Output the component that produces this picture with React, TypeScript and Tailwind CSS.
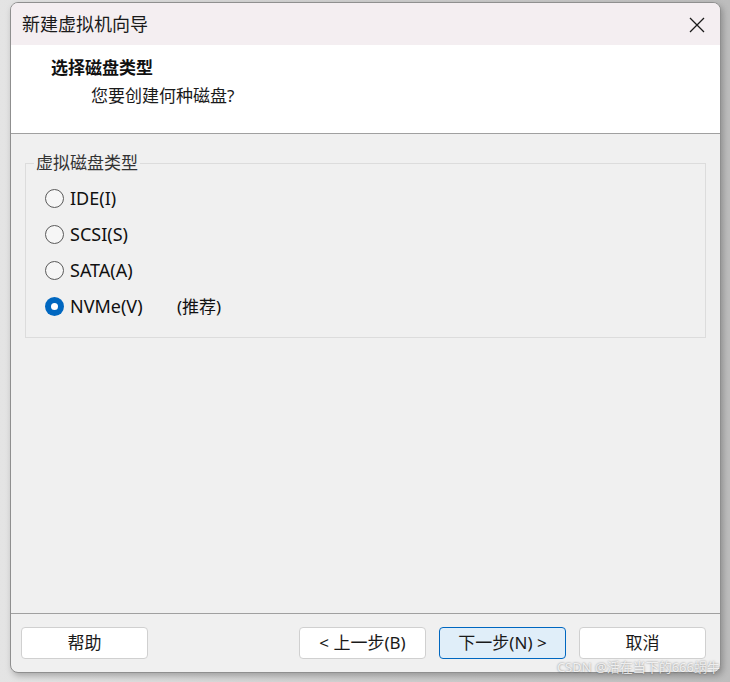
import React from "react";

const cjk = "font-['Segoe_UI','Noto_Sans','Noto_Sans_CJK_SC',sans-serif]";

function Radio({ checked }: { checked?: boolean }) {
  if (checked) {
    return (
      <span className="flex h-[19px] w-[19px] items-center justify-center rounded-full bg-[#0067c0]">
        <span className="h-[7px] w-[7px] rounded-full bg-white" />
      </span>
    );
  }
  return <span className="h-[19px] w-[19px] rounded-full border border-[#5a5a5a] bg-[#f6f6f6]" />;
}

function Btn({ children, primary }: { children: React.ReactNode; primary?: boolean }) {
  return (
    <button
      className={
        "flex h-[32px] w-[127px] items-center justify-center rounded-[4px] border text-[17px] text-[#1a1a1a] " +
        (primary ? "border-[#0067c0] bg-[#e0eef9]" : "border-[#d0d0d0] bg-white")
      }
    >
      {children}
    </button>
  );
}

const options = [
  { label: "IDE(I)" },
  { label: "SCSI(S)" },
  { label: "SATA(A)" },
  { label: "NVMe(V)", checked: true, note: "(推荐)" },
];

export default function App() {
  return (
    <div className={"relative h-[682px] w-[730px] overflow-hidden bg-[#c6c6c6] " + cjk}>
      {/* shadow behind the dialog */}
      <div className="flex h-full w-full bg-gradient-to-r from-[#e4e4e4] via-[#cfcfcf] to-[#bdbdbd] pl-[10px] pt-[2px]">
        <div className="flex h-[671px] w-[711px] flex-col overflow-hidden rounded-[8px] border border-[#8f8f8f] bg-[#f0f0f0] shadow-[2px_3px_6px_rgba(0,0,0,0.25)]">
          {/* title bar */}
          <div className="flex h-[42px] shrink-0 items-center justify-between bg-[#f4eef1] pl-[11px] pr-[15px]">
            <span className="text-[18px] text-[#1a1a1a]">新建虚拟机向导</span>
            <svg width="16" height="16" viewBox="0 0 16 16" className="mt-[2px]">
              <path d="M1 1 L15 15 M15 1 L1 15" stroke="#1a1a1a" strokeWidth="1.3" fill="none" />
            </svg>
          </div>

          {/* header */}
          <div className="h-[88px] shrink-0 bg-white pl-[40px] pt-[12px]">
            <div className="text-[17px] font-bold leading-[22px] text-[#111]">选择磁盘类型</div>
            <div className="mt-[6px] pl-[40px] text-[17px] leading-[22px] text-[#1a1a1a]">您要创建何种磁盘?</div>
          </div>
          <div className="h-px shrink-0 bg-[#a0a0a0]" />

          {/* body */}
          <div className="flex-1 px-[14px] pt-[18px]">
            <fieldset className="h-[186px] border border-[#dcdcdc]">
              <legend className="ml-[8px] px-[2px] text-[17px] leading-[22px] text-[#333]">虚拟磁盘类型</legend>
              <div className="mt-[14px] flex flex-col gap-[15px] pl-[19px]">
                {options.map((o) => (
                  <div key={o.label} className="flex h-[21px] items-center">
                    <Radio checked={o.checked} />
                    <span className="ml-[6px] w-[107px] text-[18px] text-[#111]">{o.label}</span>
                    {o.note && <span className="text-[17px] text-[#111]">{o.note}</span>}
                  </div>
                ))}
              </div>
            </fieldset>
          </div>

          {/* footer */}
          <div className="h-px shrink-0 bg-[#a0a0a0]" />
          <div className="flex h-[58px] shrink-0 items-start pl-[10px] pr-[14px] pt-[13px]">
            <Btn>帮助</Btn>
            <div className="ml-auto flex gap-[13px]">
              <Btn>&lt; 上一步(B)</Btn>
              <Btn primary>下一步(N) &gt;</Btn>
              <Btn>取消</Btn>
            </div>
          </div>
        </div>
      </div>

      {/* watermark */}
      <div className="absolute bottom-[5px] right-[10px] text-[13px] text-white/80 [text-shadow:0_0_2px_rgba(0,0,0,0.5)]">
        CSDN @活在当下的666蜗牛
      </div>
    </div>
  );
}
